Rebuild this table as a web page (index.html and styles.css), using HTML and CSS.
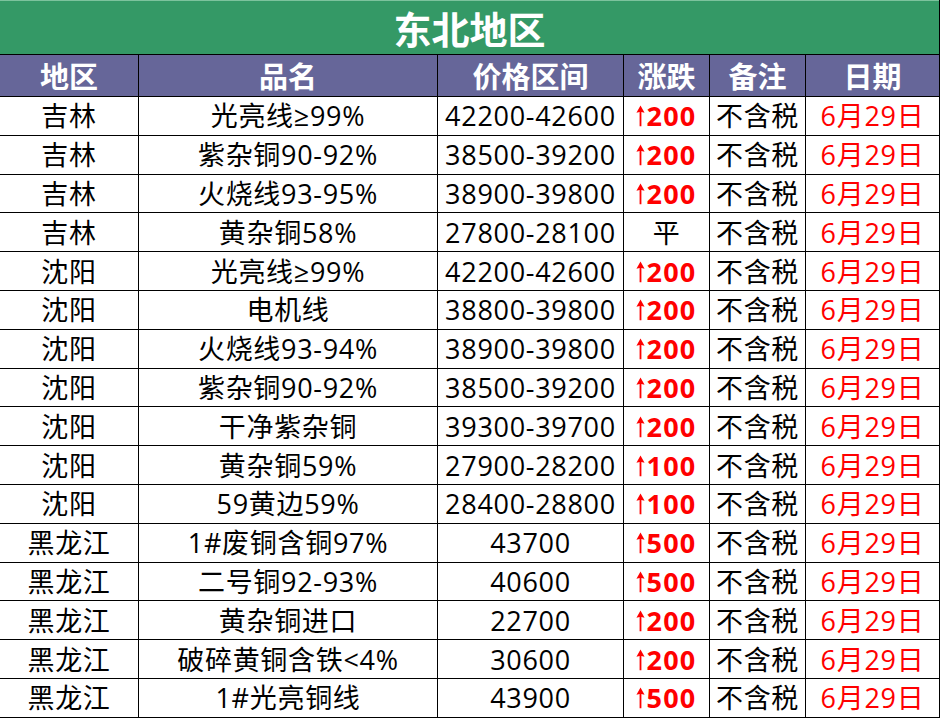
FILE: index.html
```html
<!DOCTYPE html>
<html lang="zh">
<head>
<meta charset="utf-8">
<title>东北地区</title>
<link rel="stylesheet" href="styles.css">
</head>
<body>
<div class="sheet">
  <div class="title">东北地区</div>
  <div class="hd">地区</div><div class="hd">品名</div><div class="hd">价格区间</div><div class="hd">涨跌</div><div class="hd">备注</div><div class="hd">日期</div>

  <div class="c">吉林</div><div class="c">光亮线≥99%</div><div class="c">42200-42600</div><div class="c up"><svg class="ar" viewBox="0 0 10 24"><path d="M5 1 L9.5 9 L6 8 V24 H4 V8 L0.5 9 Z"/></svg>200</div><div class="c">不含税</div><div class="c date">6月29日</div>
  <div class="c">吉林</div><div class="c">紫杂铜90-92%</div><div class="c">38500-39200</div><div class="c up"><svg class="ar" viewBox="0 0 10 24"><path d="M5 1 L9.5 9 L6 8 V24 H4 V8 L0.5 9 Z"/></svg>200</div><div class="c">不含税</div><div class="c date">6月29日</div>
  <div class="c">吉林</div><div class="c">火烧线93-95%</div><div class="c">38900-39800</div><div class="c up"><svg class="ar" viewBox="0 0 10 24"><path d="M5 1 L9.5 9 L6 8 V24 H4 V8 L0.5 9 Z"/></svg>200</div><div class="c">不含税</div><div class="c date">6月29日</div>
  <div class="c">吉林</div><div class="c">黄杂铜58%</div><div class="c">27800-28100</div><div class="c">平</div><div class="c">不含税</div><div class="c date">6月29日</div>
  <div class="c">沈阳</div><div class="c">光亮线≥99%</div><div class="c">42200-42600</div><div class="c up"><svg class="ar" viewBox="0 0 10 24"><path d="M5 1 L9.5 9 L6 8 V24 H4 V8 L0.5 9 Z"/></svg>200</div><div class="c">不含税</div><div class="c date">6月29日</div>
  <div class="c">沈阳</div><div class="c">电机线</div><div class="c">38800-39800</div><div class="c up"><svg class="ar" viewBox="0 0 10 24"><path d="M5 1 L9.5 9 L6 8 V24 H4 V8 L0.5 9 Z"/></svg>200</div><div class="c">不含税</div><div class="c date">6月29日</div>
  <div class="c">沈阳</div><div class="c">火烧线93-94%</div><div class="c">38900-39800</div><div class="c up"><svg class="ar" viewBox="0 0 10 24"><path d="M5 1 L9.5 9 L6 8 V24 H4 V8 L0.5 9 Z"/></svg>200</div><div class="c">不含税</div><div class="c date">6月29日</div>
  <div class="c">沈阳</div><div class="c">紫杂铜90-92%</div><div class="c">38500-39200</div><div class="c up"><svg class="ar" viewBox="0 0 10 24"><path d="M5 1 L9.5 9 L6 8 V24 H4 V8 L0.5 9 Z"/></svg>200</div><div class="c">不含税</div><div class="c date">6月29日</div>
  <div class="c">沈阳</div><div class="c">干净紫杂铜</div><div class="c">39300-39700</div><div class="c up"><svg class="ar" viewBox="0 0 10 24"><path d="M5 1 L9.5 9 L6 8 V24 H4 V8 L0.5 9 Z"/></svg>200</div><div class="c">不含税</div><div class="c date">6月29日</div>
  <div class="c">沈阳</div><div class="c">黄杂铜59%</div><div class="c">27900-28200</div><div class="c up"><svg class="ar" viewBox="0 0 10 24"><path d="M5 1 L9.5 9 L6 8 V24 H4 V8 L0.5 9 Z"/></svg>100</div><div class="c">不含税</div><div class="c date">6月29日</div>
  <div class="c">沈阳</div><div class="c">59黄边59%</div><div class="c">28400-28800</div><div class="c up"><svg class="ar" viewBox="0 0 10 24"><path d="M5 1 L9.5 9 L6 8 V24 H4 V8 L0.5 9 Z"/></svg>100</div><div class="c">不含税</div><div class="c date">6月29日</div>
  <div class="c">黑龙江</div><div class="c">1#废铜含铜97%</div><div class="c">43700</div><div class="c up"><svg class="ar" viewBox="0 0 10 24"><path d="M5 1 L9.5 9 L6 8 V24 H4 V8 L0.5 9 Z"/></svg>500</div><div class="c">不含税</div><div class="c date">6月29日</div>
  <div class="c">黑龙江</div><div class="c">二号铜92-93%</div><div class="c">40600</div><div class="c up"><svg class="ar" viewBox="0 0 10 24"><path d="M5 1 L9.5 9 L6 8 V24 H4 V8 L0.5 9 Z"/></svg>500</div><div class="c">不含税</div><div class="c date">6月29日</div>
  <div class="c">黑龙江</div><div class="c">黄杂铜进口</div><div class="c">22700</div><div class="c up"><svg class="ar" viewBox="0 0 10 24"><path d="M5 1 L9.5 9 L6 8 V24 H4 V8 L0.5 9 Z"/></svg>200</div><div class="c">不含税</div><div class="c date">6月29日</div>
  <div class="c">黑龙江</div><div class="c">破碎黄铜含铁&lt;4%</div><div class="c">30600</div><div class="c up"><svg class="ar" viewBox="0 0 10 24"><path d="M5 1 L9.5 9 L6 8 V24 H4 V8 L0.5 9 Z"/></svg>200</div><div class="c">不含税</div><div class="c date">6月29日</div>
  <div class="c">黑龙江</div><div class="c">1#光亮铜线</div><div class="c">43900</div><div class="c up"><svg class="ar" viewBox="0 0 10 24"><path d="M5 1 L9.5 9 L6 8 V24 H4 V8 L0.5 9 Z"/></svg>500</div><div class="c">不含税</div><div class="c date">6月29日</div>
</div>
</body>
</html>
```

FILE: styles.css
```css
html, body {
  margin: 0;
  padding: 0;
  background: #ffffff;
}

.sheet {
  width: 939px;
  padding-right: 1px;
  padding-bottom: 1px;
  background: #000000;
  display: grid;
  grid-template-columns: 138px 298px 185px 85px 95px 133px;
  grid-template-rows: 54px 41px repeat(16, 37.8px);
  gap: 1px;
  font-family: "Open Sans", "Noto Sans CJK SC", sans-serif;
}

.title {
  grid-column: 1 / -1;
  background: #349966;
  border-top: 1px solid #7cc39d;
  color: #ffffff;
  font-family: "Noto Sans CJK SC", sans-serif;
  font-size: 38px;
  font-weight: 700;
  display: flex;
  align-items: center;
  justify-content: center;
  line-height: 1;
}

.hd {
  background: #666699;
  color: #ffffff;
  font-family: "Noto Sans CJK SC", sans-serif;
  font-size: 29px;
  font-weight: 700;
  display: flex;
  align-items: center;
  justify-content: center;
  line-height: 1;
}

.c {
  background: #ffffff;
  color: #000000;
  font-size: 27px;
  letter-spacing: 0.7px;
  display: flex;
  align-items: center;
  justify-content: center;
  line-height: 1;
  white-space: nowrap;
}

.up {
  color: #ff0000;
  font-weight: 700;
  letter-spacing: 1.3px;
}

.ar {
  width: 9px;
  height: 23px;
  margin-right: 1px;
  fill: #ff0000;
  flex: none;
}

.date {
  color: #ff0000;
}
```
